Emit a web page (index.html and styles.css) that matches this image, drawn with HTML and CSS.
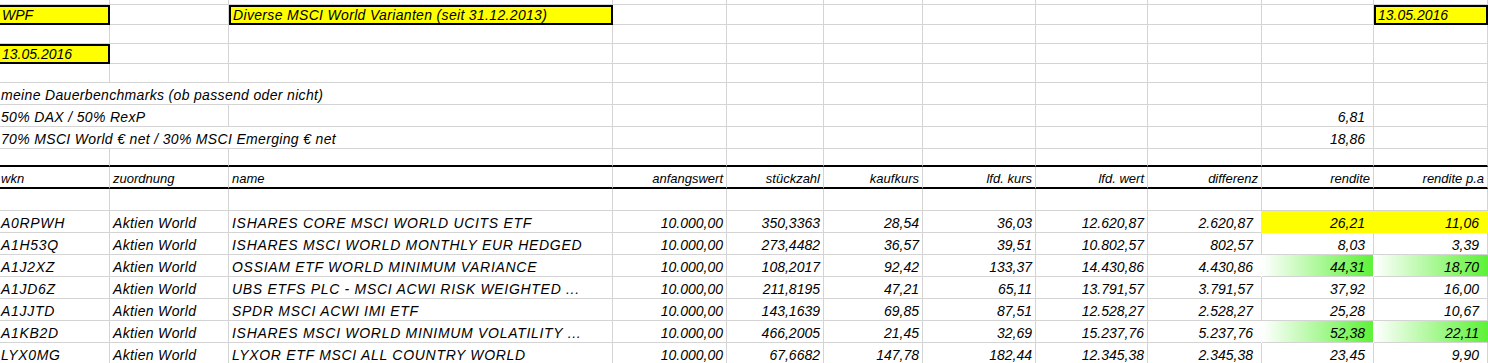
FILE: index.html
```html
<!DOCTYPE html>
<html lang="de">
<head>
  <meta charset="UTF-8">
  <title>Diverse MSCI World Varianten</title>
  <link rel="stylesheet" href="styles.css">
</head>
<body>
  <div class="sheet">
    <!-- angeschnittene Zeile oben -->
    <div class="c"></div><div class="c"></div><div class="c"></div><div class="c"></div><div class="c"></div><div class="c"></div><div class="c"></div><div class="c"></div><div class="c"></div><div class="c"></div><div class="c"></div>

    <div class="c box">WPF</div><div class="c"></div><div class="c box t">Diverse MSCI World Varianten (seit 31.12.2013)</div><div class="c"></div><div class="c"></div><div class="c"></div><div class="c"></div><div class="c"></div><div class="c"></div><div class="c"></div><div class="c box">13.05.2016</div>
    <div class="c"></div><div class="c"></div><div class="c"></div><div class="c"></div><div class="c"></div><div class="c"></div><div class="c"></div><div class="c"></div><div class="c"></div><div class="c"></div><div class="c"></div>
    <div class="c box">13.05.2016</div><div class="c"></div><div class="c"></div><div class="c"></div><div class="c"></div><div class="c"></div><div class="c"></div><div class="c"></div><div class="c"></div><div class="c"></div><div class="c"></div>
    <div class="c"></div><div class="c"></div><div class="c"></div><div class="c"></div><div class="c"></div><div class="c"></div><div class="c"></div><div class="c"></div><div class="c"></div><div class="c"></div><div class="c"></div>

    <!-- benchmarks -->
    <div class="c t span3">meine Dauerbenchmarks (ob passend oder nicht)</div><div class="c"></div><div class="c"></div><div class="c"></div><div class="c"></div><div class="c"></div><div class="c"></div><div class="c"></div><div class="c"></div>
    <div class="c t span2">50% DAX / 50% RexP</div><div class="c"></div><div class="c"></div><div class="c"></div><div class="c"></div><div class="c"></div><div class="c"></div><div class="c"></div><div class="c rw">6,81</div><div class="c"></div>
    <div class="c t span3">70% MSCI World € net / 30% MSCI Emerging € net</div><div class="c"></div><div class="c"></div><div class="c"></div><div class="c"></div><div class="c"></div><div class="c"></div><div class="c rw">18,86</div><div class="c"></div>
    <div class="c rule"></div><div class="c rule"></div><div class="c rule"></div><div class="c rule"></div><div class="c rule"></div><div class="c rule"></div><div class="c rule"></div><div class="c rule"></div><div class="c rule"></div><div class="c rule"></div><div class="c rule"></div>

    <!-- kopfzeile -->
    <div class="c rule hd">wkn</div><div class="c rule hd">zuordnung</div><div class="c rule hd">name</div><div class="c rule hd r">anfangswert</div><div class="c rule hd r">stückzahl</div><div class="c rule hd r">kaufkurs</div><div class="c rule hd r">lfd. kurs</div><div class="c rule hd r">lfd. wert</div><div class="c rule hd r">differenz</div><div class="c rule hd r">rendite</div><div class="c rule hd r">rendite p.a</div>
    <div class="c"></div><div class="c"></div><div class="c"></div><div class="c"></div><div class="c"></div><div class="c"></div><div class="c"></div><div class="c"></div><div class="c"></div><div class="c"></div><div class="c"></div>

    <!-- positionen -->
    <div class="c u">A0RPWH</div><div class="c t">Aktien World</div><div class="c u">ISHARES CORE MSCI WORLD UCITS ETF</div><div class="c r">10.000,00</div><div class="c r">350,3363</div><div class="c r">28,54</div><div class="c r">36,03</div><div class="c r">12.620,87</div><div class="c rw">2.620,87</div><div class="c rw hl">26,21</div><div class="c rw hl">11,06</div>
    <div class="c u">A1H53Q</div><div class="c t">Aktien World</div><div class="c u">ISHARES MSCI WORLD MONTHLY EUR HEDGED</div><div class="c r">10.000,00</div><div class="c r">273,4482</div><div class="c r">36,57</div><div class="c r">39,51</div><div class="c r">10.802,57</div><div class="c rw">802,57</div><div class="c rw">8,03</div><div class="c rw">3,39</div>
    <div class="c u">A1J2XZ</div><div class="c t">Aktien World</div><div class="c u">OSSIAM ETF WORLD MINIMUM VARIANCE</div><div class="c r">10.000,00</div><div class="c r">108,2017</div><div class="c r">92,42</div><div class="c r">133,37</div><div class="c r">14.430,86</div><div class="c rw">4.430,86</div><div class="c rw top">44,31</div><div class="c rw top">18,70</div>
    <div class="c u">A1JD6Z</div><div class="c t">Aktien World</div><div class="c u">UBS ETFS PLC - MSCI ACWI RISK WEIGHTED ...</div><div class="c r">10.000,00</div><div class="c r">211,8195</div><div class="c r">47,21</div><div class="c r">65,11</div><div class="c r">13.791,57</div><div class="c rw">3.791,57</div><div class="c rw">37,92</div><div class="c rw">16,00</div>
    <div class="c u">A1JJTD</div><div class="c t">Aktien World</div><div class="c u">SPDR MSCI ACWI IMI ETF</div><div class="c r">10.000,00</div><div class="c r">143,1639</div><div class="c r">69,85</div><div class="c r">87,51</div><div class="c r">12.528,27</div><div class="c rw">2.528,27</div><div class="c rw">25,28</div><div class="c rw">10,67</div>
    <div class="c u">A1KB2D</div><div class="c t">Aktien World</div><div class="c u">ISHARES MSCI WORLD MINIMUM VOLATILITY ...</div><div class="c r">10.000,00</div><div class="c r">466,2005</div><div class="c r">21,45</div><div class="c r">32,69</div><div class="c r">15.237,76</div><div class="c rw">5.237,76</div><div class="c rw top">52,38</div><div class="c rw top">22,11</div>
    <div class="c u">LYX0MG</div><div class="c t">Aktien World</div><div class="c u">LYXOR ETF MSCI ALL COUNTRY WORLD</div><div class="c r">10.000,00</div><div class="c r">67,6682</div><div class="c r">147,78</div><div class="c r">182,44</div><div class="c r">12.345,38</div><div class="c rw">2.345,38</div><div class="c rw">23,45</div><div class="c rw">9,90</div>
  </div>
</body>
</html>
```

FILE: styles.css
```css
body { margin: 0; background: #fff; overflow: hidden; font-family: "Liberation Sans", Arial, sans-serif; font-size: 14px; font-style: italic; color: #000; }
.sheet { display: grid; margin-left: -2px; grid-template-columns: 112px 119px 384px 114px 97px 99px 113px 112px 114px 112px 114px; grid-template-rows: 5px 20px 19px 20px 19px 22px 22px 22px 18px 22px 22px repeat(7, 22px); }
.c { box-sizing: border-box; display: flex; align-items: flex-end; padding: 0 3px 1px 3px; border-right: 1px solid #d4d4d4; border-bottom: 1px solid #d4d4d4; white-space: nowrap; overflow: hidden; line-height: normal; }
.span2 { grid-column: span 2; }
.span3 { grid-column: span 3; }
.t { letter-spacing: 0.33px; }
.u { letter-spacing: 0.7px; }
.hd { font-size: 13px; }
.r { justify-content: flex-end; }
.rw { justify-content: flex-end; padding-right: 8px; }
.rule { border-bottom: 2px solid #000; }
.box { border: 0; background: #ff0; box-shadow: inset 0 0 0 2px #000; padding-bottom: 2px; padding-left: 4px; }
.hl { background: #ff0; border-color: #ff0; box-shadow: -1px 0 0 #ff0; }
.top { background: linear-gradient(90deg, #fff 0%, #5ef238 100%); border-right-color: #5ef238; box-shadow: -1px 0 0 #fff; }
```
